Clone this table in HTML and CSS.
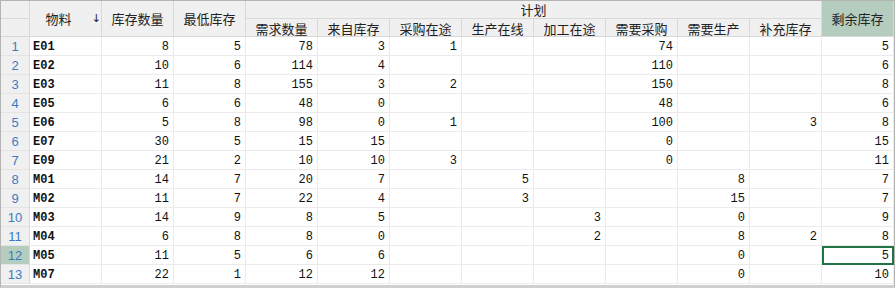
FILE: index.html
```html
<!DOCTYPE html>
<html lang="zh">
<head>
<meta charset="utf-8">
<link rel="stylesheet" href="styles.css">
</head>
<body>
<div class="sheet">
  <div class="hd corner"></div>
  <div class="hd corner2"></div>
  <div class="hd span2 c2 sortable">物料<span class="arrow">↓</span></div>
  <div class="hd span2 c3">库存数量</div>
  <div class="hd span2 c4">最低库存</div>
  <div class="hd group">计划</div>
  <div class="hd span2 c13 sel">剩余库存</div>
  <div class="hd sub">需求数量</div>
  <div class="hd sub">来自库存</div>
  <div class="hd sub">采购在途</div>
  <div class="hd sub">生产在线</div>
  <div class="hd sub">加工在途</div>
  <div class="hd sub">需要采购</div>
  <div class="hd sub">需要生产</div>
  <div class="hd sub">补充库存</div>

  <div class="rh">1</div><div class="c t">E01</div><div class="c">8</div><div class="c">5</div><div class="c">78</div><div class="c">3</div><div class="c">1</div><div class="c"></div><div class="c"></div><div class="c">74</div><div class="c"></div><div class="c"></div><div class="c">5</div>
  <div class="rh">2</div><div class="c t">E02</div><div class="c">10</div><div class="c">6</div><div class="c">114</div><div class="c">4</div><div class="c"></div><div class="c"></div><div class="c"></div><div class="c">110</div><div class="c"></div><div class="c"></div><div class="c">6</div>
  <div class="rh">3</div><div class="c t">E03</div><div class="c">11</div><div class="c">8</div><div class="c">155</div><div class="c">3</div><div class="c">2</div><div class="c"></div><div class="c"></div><div class="c">150</div><div class="c"></div><div class="c"></div><div class="c">8</div>
  <div class="rh">4</div><div class="c t">E05</div><div class="c">6</div><div class="c">6</div><div class="c">48</div><div class="c">0</div><div class="c"></div><div class="c"></div><div class="c"></div><div class="c">48</div><div class="c"></div><div class="c"></div><div class="c">6</div>
  <div class="rh">5</div><div class="c t">E06</div><div class="c">5</div><div class="c">8</div><div class="c">98</div><div class="c">0</div><div class="c">1</div><div class="c"></div><div class="c"></div><div class="c">100</div><div class="c"></div><div class="c">3</div><div class="c">8</div>
  <div class="rh">6</div><div class="c t">E07</div><div class="c">30</div><div class="c">5</div><div class="c">15</div><div class="c">15</div><div class="c"></div><div class="c"></div><div class="c"></div><div class="c">0</div><div class="c"></div><div class="c"></div><div class="c">15</div>
  <div class="rh">7</div><div class="c t">E09</div><div class="c">21</div><div class="c">2</div><div class="c">10</div><div class="c">10</div><div class="c">3</div><div class="c"></div><div class="c"></div><div class="c">0</div><div class="c"></div><div class="c"></div><div class="c">11</div>
  <div class="rh">8</div><div class="c t">M01</div><div class="c">14</div><div class="c">7</div><div class="c">20</div><div class="c">7</div><div class="c"></div><div class="c">5</div><div class="c"></div><div class="c"></div><div class="c">8</div><div class="c"></div><div class="c">7</div>
  <div class="rh">9</div><div class="c t">M02</div><div class="c">11</div><div class="c">7</div><div class="c">22</div><div class="c">4</div><div class="c"></div><div class="c">3</div><div class="c"></div><div class="c"></div><div class="c">15</div><div class="c"></div><div class="c">7</div>
  <div class="rh">10</div><div class="c t">M03</div><div class="c">14</div><div class="c">9</div><div class="c">8</div><div class="c">5</div><div class="c"></div><div class="c"></div><div class="c">3</div><div class="c"></div><div class="c">0</div><div class="c"></div><div class="c">9</div>
  <div class="rh">11</div><div class="c t">M04</div><div class="c">6</div><div class="c">8</div><div class="c">8</div><div class="c">0</div><div class="c"></div><div class="c"></div><div class="c">2</div><div class="c"></div><div class="c">8</div><div class="c">2</div><div class="c">8</div>
  <div class="rh sel">12</div><div class="c t">M05</div><div class="c">11</div><div class="c">5</div><div class="c">6</div><div class="c">6</div><div class="c"></div><div class="c"></div><div class="c"></div><div class="c"></div><div class="c">0</div><div class="c"></div><div class="c active">5</div>
  <div class="rh">13</div><div class="c t">M07</div><div class="c">22</div><div class="c">1</div><div class="c">12</div><div class="c">12</div><div class="c"></div><div class="c"></div><div class="c"></div><div class="c"></div><div class="c">0</div><div class="c"></div><div class="c">10</div>
</div>
</body>
</html>
```
FILE: styles.css
```css
* { box-sizing: border-box; }
html, body { margin: 0; padding: 0; background: #fff; }
.sheet {
  width: 895px;
  height: 288px;
  display: grid;
  grid-template-columns: 29px repeat(12, 72px);
  grid-template-rows: 18px 18px repeat(13, 19px);
  border: 1px solid #b4b4b4;
  border-bottom: 3px solid #cfcfcf;
  background: #fff;
}
.hd {
  background: #f0f0f0;
  border-right: 1px solid #d9d9d9;
  border-bottom: 1px solid #d9d9d9;
  font-family: "Noto Sans CJK SC", sans-serif;
  font-size: 13px;
  color: #222;
  display: flex;
  align-items: center;
  justify-content: center;
  line-height: 1;
}
.corner { grid-column: 1; grid-row: 1; }
.corner2 { grid-column: 1; grid-row: 2; }
.span2 { grid-row: 1 / span 2; }
.c2 { grid-column: 2; }
.c3 { grid-column: 3; }
.c4 { grid-column: 4; }
.c13 { grid-column: 13; }
.group { grid-column: 5 / span 8; grid-row: 1; }
.sub { grid-row: 2; padding-top: 2px; }
.hd.sel { background: #b5cdbe; }
.sortable { position: relative; padding-right: 14px; }
.arrow {
  position: absolute;
  right: 0;
  top: 12px;
  font-family: "DejaVu Sans", sans-serif;
  font-size: 11px;
  color: #222;
}
.rh {
  background: #f0f0f0;
  border-right: 1px solid #d9d9d9;
  border-bottom: 1px solid #e4e4e4;
  color: #3b7cc0;
  font-family: "Liberation Sans", sans-serif;
  font-size: 13px;
  display: flex;
  align-items: center;
  justify-content: center;
  padding-top: 1px;
}
.rh.sel { background: #b5cdbe; }
.c {
  border-right: 1px solid #ebebeb;
  border-bottom: 1px solid #ebebeb;
  font-family: "Liberation Mono", monospace;
  font-size: 12px;
  color: #111;
  display: flex;
  align-items: center;
  justify-content: flex-end;
  padding-right: 4px;
  padding-top: 1px;
}
.c.t { justify-content: flex-start; padding-left: 3px; padding-right: 0; font-weight: 600; }
.c.active { outline: 2px solid #217346; outline-offset: -2px; }
```
